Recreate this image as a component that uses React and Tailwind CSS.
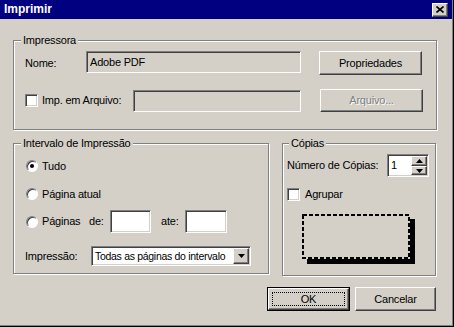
import React from 'react';

const sunken = 'border border-t-[#808080] border-l-[#808080] border-r-white border-b-white shadow-[inset_1px_1px_0_#404040,inset_-1px_-1px_0_#d4d0c8]';
const raised = 'border border-t-white border-l-white border-r-[#404040] border-b-[#404040] shadow-[inset_-1px_-1px_0_#808080] bg-[#d4d0c8]';
const etched = 'border border-[#808080] shadow-[inset_1px_1px_0_#fff,1px_1px_0_#fff]';

const Group = ({ title, legendLeft, className, children }) => (
    <div className={`relative ${etched} ${className}`}>
        <span className={`absolute -top-[7px] ${legendLeft} px-[2px] bg-[#d4d0c8] leading-[13px]`}>{title}</span>
        {children}
    </div>
);

const Checkbox = () => (
    <span className={`block w-[13px] h-[13px] bg-white shrink-0 ${sunken}`} />
);

const Radio = ({ checked }) => (
    <span className="ml-[1px] flex items-center justify-center w-[12px] h-[12px] shrink-0 rounded-full bg-white border border-t-[#808080] border-l-[#808080] border-r-white border-b-white shadow-[inset_1px_1px_0_#404040]">
        {checked && <span className="block w-[4px] h-[4px] rounded-full bg-black" />}
    </span>
);

const Arrow = ({ up }) => (
    <svg width="7" height="4" viewBox="0 0 7 4">
        <polygon points={up ? '3.5,0 7,4 0,4' : '0,0 7,0 3.5,4'} fill="#000" />
    </svg>
);

const App = () => {
    return (
        <div className="w-[454px] h-[327px] bg-[#d4d0c8] font-['Liberation_Sans',Arial,sans-serif] text-[11px] leading-[13px] tracking-[-0.2px] text-black overflow-hidden">
            <div className="w-[454px] h-[327px] border-r border-b border-black">
                <div className="w-[453px] h-[326px] border-r border-b border-[#808080] flex flex-col">
                    {/* title bar */}
                    <div className="h-[19px] bg-[#000080] flex items-center justify-between pl-[4px] pr-[4px]">
                        <span className="text-white font-bold text-[12px] tracking-normal">Imprimir</span>
                        <span className={`w-[16px] h-[14px] flex items-center justify-center ${raised}`}>
                            <svg width="8" height="7" viewBox="0 0 8 7">
                                <path d="M0.5 0.5L7.5 6.5M7.5 0.5L0.5 6.5" stroke="#000" strokeWidth="1.6" />
                            </svg>
                        </span>
                    </div>

                    <div className="flex flex-col pl-[13px]">
                        <Group title="Impressora" legendLeft="left-[7px]" className="mt-[21px] w-[424px] h-[90px]">
                            <div className="flex items-start mt-[10px] pl-[11px]">
                                <span className="w-[61px] h-[22px] flex items-center pt-[2px]">Nome:</span>
                                <div className={`${sunken} w-[215px] h-[22px] flex items-center pl-[3px]`}>Adobe PDF</div>
                                <button className={`${raised} ml-[18px] w-[103px] h-[24px]`}>Propriedades</button>
                            </div>
                            <div className="flex items-center mt-[14px] pl-[11px] h-[23px]">
                                <div className="w-[108px] flex items-center">
                                    <Checkbox />
                                    <span className="ml-[4px]">Imp. em Arquivo:</span>
                                </div>
                                <div className={`${sunken} w-[168px] h-[22px]`} />
                                <button disabled className={`${raised} ml-[19px] w-[103px] h-[23px] text-[#808080] [text-shadow:1px_1px_0_#fff]`}>Arquivo...</button>
                            </div>
                        </Group>

                        <div className="flex items-start gap-[13px] mt-[13px]">
                            <Group title="Intervalo de Impressão" legendLeft="left-[7px]" className="w-[256px] h-[131px] flex flex-col pl-[11px]">
                                <div className="flex items-center h-[22px] mt-[11px]">
                                    <Radio checked />
                                    <span className="ml-[4px]">Tudo</span>
                                </div>
                                <div className="flex items-center h-[22px] mt-[6px]">
                                    <Radio />
                                    <span className="ml-[4px]">Página atual</span>
                                </div>
                                <div className="flex items-center h-[23px] mt-[5px]">
                                    <Radio />
                                    <span className="ml-[4px] w-[47px]">Páginas</span>
                                    <span className="w-[21px]">de:</span>
                                    <div className={`${sunken} bg-white w-[41px] h-[23px]`} />
                                    <span className="ml-[10px] w-[24px]">ate:</span>
                                    <div className={`${sunken} bg-white w-[42px] h-[23px]`} />
                                </div>
                                <div className="flex items-center h-[20px] mt-[13px]">
                                    <span className="w-[66px]">Impressão:</span>
                                    <div className={`${sunken} bg-white w-[160px] h-[20px] flex items-stretch p-[1px]`}>
                                        <span className="flex-1 flex items-center pl-[2px] whitespace-nowrap overflow-hidden text-[10.5px] tracking-[-0.3px]">Todas as páginas do intervalo</span>
                                        <span className={`${raised} w-[16px] flex items-center justify-center`}>
                                            <Arrow />
                                        </span>
                                    </div>
                                </div>
                            </Group>

                            <Group title="Cópias" legendLeft="left-[6px]" className="w-[154px] h-[133px] flex flex-col pl-[4px]">
                                <div className="flex items-center h-[23px] mt-[10px]">
                                    <span className="w-[100px]">Número de Cópias:</span>
                                    <div className={`${sunken} bg-white w-[42px] h-[23px] flex p-[1px]`}>
                                        <span className="flex-1 flex items-center pl-[2px]">1</span>
                                        <div className="w-[16px] flex flex-col">
                                            <span className={`${raised} h-[10px] flex items-center justify-center`}><Arrow up /></span>
                                            <span className={`${raised} h-[9px] flex items-center justify-center`}><Arrow /></span>
                                        </div>
                                    </div>
                                </div>
                                <div className="flex items-center h-[13px] mt-[11px]">
                                    <Checkbox />
                                    <span className="ml-[5px]">Agrupar</span>
                                </div>
                                <div className="mt-[13px] ml-[15px] w-[108px] h-[45px] shadow-[5px_5px_0_#000]">
                                    <svg width="108" height="45" viewBox="0 0 108 45" className="block">
                                        <rect x="1" y="1" width="106" height="43" fill="#d4d0c8" stroke="#000" strokeWidth="2" strokeDasharray="4 2" />
                                    </svg>
                                </div>
                            </Group>
                        </div>

                        <div className="flex justify-end gap-[5px] mt-[11px] pr-[16px]">
                            <button className="w-[83px] h-[24px] border border-black">
                                <span className={`w-full h-full flex p-[3px] ${raised}`}>
                                    <span className="flex-1 flex items-center justify-center border border-dotted border-black">OK</span>
                                </span>
                            </button>
                            <button className={`${raised} w-[81px] h-[24px]`}>Cancelar</button>
                        </div>
                    </div>
                </div>
            </div>
        </div>
    );
};

export default App;
